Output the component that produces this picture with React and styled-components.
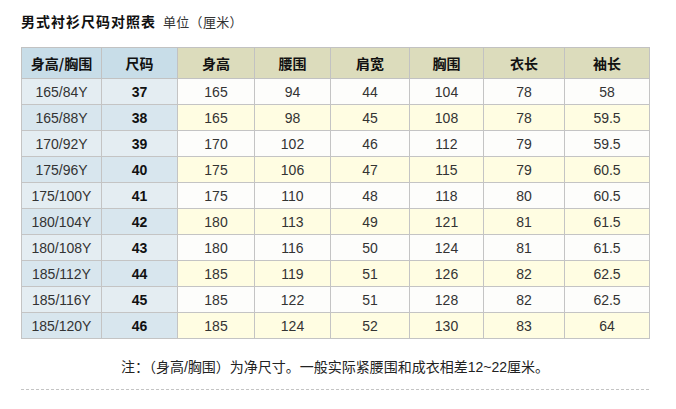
import React from "react";
import styled, { createGlobalStyle } from "styled-components";

const Global = createGlobalStyle`
  html, body { margin: 0; padding: 0; background: #ffffff; }
  body { font-family: "Liberation Sans", Arial, "Noto Sans CJK SC", sans-serif; color: #000; }
`;

const Page = styled.div`
  width: 628px;
  padding: 11px 0 0 21px;
`;

const Title = styled.div`
  display: flex;
  align-items: baseline;
  gap: 7px;
  height: 20px;
  line-height: 20px;
  margin-bottom: 16px;
`;

const TitleMain = styled.span`
  font-family: "Noto Sans CJK SC", sans-serif;
  font-weight: 700;
  font-size: 14px;
  letter-spacing: 1px;
  color: #111;
`;

const TitleUnit = styled.span`
  font-family: "Noto Sans CJK SC", sans-serif;
  font-size: 13px;
  letter-spacing: 0.3px;
  color: #333;
`;

const Table = styled.table`
  border-collapse: collapse;
  table-layout: fixed;
  width: 628px;
  border: 1px solid #c4c4c4;
`;

const HeadCell = styled.th`
  height: 30px;
  padding: 0;
  text-align: center;
  font-family: "Noto Sans CJK SC", sans-serif;
  font-size: 14px;
  font-weight: 700;
  color: #111;
  border: 1px solid #c2c2c2;
  background: ${(p) => (p.$side ? "#c8dde8" : "#dcdcbc")};
`;

const Cell = styled.td`
  height: 25px;
  padding: 0;
  text-align: center;
  font-size: 14px;
  font-weight: ${(p) => (p.$bold ? 700 : 400)};
  color: ${(p) => (p.$bold ? "#111" : "#333")};
  border: 1px solid #c4c4c4;
  background: ${(p) =>
    p.$side
      ? p.$even
        ? "#d8e6ee"
        : "#e4edf2"
      : p.$even
      ? "#fffde2"
      : "#fdfdfb"};
`;

const Note = styled.div`
  width: 628px;
  margin-top: 18px;
  height: 20px;
  line-height: 20px;
  text-align: center;
  font-family: "Liberation Sans", Arial, "Noto Sans CJK SC", sans-serif;
  font-size: 14px;
  color: #222;
`;

const Divider = styled.div`
  width: 628px;
  height: 1px;
  margin-top: 12px;
  background: repeating-linear-gradient(
    to right,
    #c4c4c4 0,
    #c4c4c4 3px,
    transparent 3px,
    transparent 5px
  );
`;

const widths = [80, 76, 77, 76, 79, 74, 81, 85];
const heads = ["身高/胸围", "尺码", "身高", "腰围", "肩宽", "胸围", "衣长", "袖长"];
const rows = [
  ["165/84Y", "37", "165", "94", "44", "104", "78", "58"],
  ["165/88Y", "38", "165", "98", "45", "108", "78", "59.5"],
  ["170/92Y", "39", "170", "102", "46", "112", "79", "59.5"],
  ["175/96Y", "40", "175", "106", "47", "115", "79", "60.5"],
  ["175/100Y", "41", "175", "110", "48", "118", "80", "60.5"],
  ["180/104Y", "42", "180", "113", "49", "121", "81", "61.5"],
  ["180/108Y", "43", "180", "116", "50", "124", "81", "61.5"],
  ["185/112Y", "44", "185", "119", "51", "126", "82", "62.5"],
  ["185/116Y", "45", "185", "122", "51", "128", "82", "62.5"],
  ["185/120Y", "46", "185", "124", "52", "130", "83", "64"],
];

export default function App() {
  return (
    <>
      <Global />
      <Page>
        <Title>
          <TitleMain>男式衬衫尺码对照表</TitleMain>
          <TitleUnit>单位（厘米）</TitleUnit>
        </Title>
        <Table>
          <colgroup>
            {widths.map((w, i) => (
              <col key={i} style={{ width: w }} />
            ))}
          </colgroup>
          <thead>
            <tr>
              {heads.map((h, i) => (
                <HeadCell key={h} $side={i < 2}>
                  {h}
                </HeadCell>
              ))}
            </tr>
          </thead>
          <tbody>
            {rows.map((r, ri) => (
              <tr key={ri}>
                {r.map((v, ci) => (
                  <Cell key={ci} $side={ci < 2} $bold={ci === 1} $even={ri % 2 === 1}>
                    {v}
                  </Cell>
                ))}
              </tr>
            ))}
          </tbody>
        </Table>
        <Note>注：（身高/胸围）为净尺寸。一般实际紧腰围和成衣相差12~22厘米。</Note>
        <Divider />
      </Page>
    </>
  );
}
